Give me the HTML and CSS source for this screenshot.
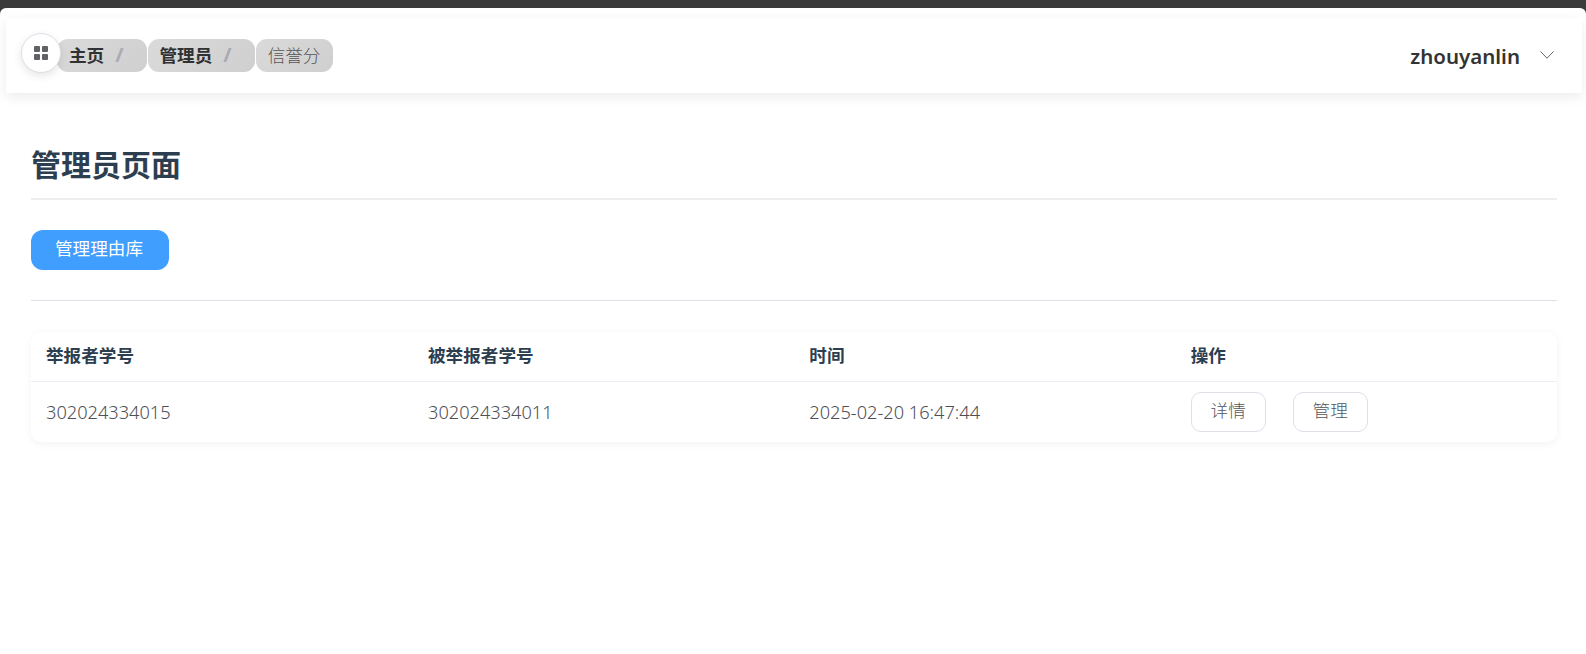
FILE: index.html
```html
<!DOCTYPE html>
<html lang="zh-CN">
<head>
<meta charset="utf-8">
<title>管理员页面</title>
<link rel="stylesheet" href="styles.css">
</head>
<body>
<div class="shell">
  <header class="topbar">
    <nav class="crumbs">
      <button class="toggle" aria-label="menu">
        <svg viewBox="0 0 14 14" width="14" height="14"><rect x="0" y="0" width="6" height="6" rx="1"/><rect x="8" y="0" width="6" height="6" rx="1"/><rect x="0" y="8" width="6" height="6" rx="1"/><rect x="8" y="8" width="6" height="6" rx="1"/></svg>
      </button>
      <span class="crumb crumb-link">主页<i class="sep">/</i></span>
      <span class="crumb crumb-link">管理员<i class="sep">/</i></span>
      <span class="crumb">信誉分</span>
    </nav>
    <div class="user">
      <span class="user-name">zhouyanlin</span>
      <svg class="chevron" viewBox="0 0 14 8" width="14" height="8"><path d="M0.5 0.5L7 7.2L13.5 0.5"/></svg>
    </div>
  </header>
  <main class="content">
    <h1 class="title">管理员页面</h1>
    <div class="actions"><button class="primary">管理理由库</button></div>
    <div class="card">
      <table class="table">
        <thead>
          <tr><th class="col-first">举报者学号</th><th>被举报者学号</th><th>时间</th><th>操作</th></tr>
        </thead>
        <tbody>
          <tr>
            <td>302024334015</td>
            <td>302024334011</td>
            <td>2025-02-20 16:47:44</td>
            <td><div class="ops"><button class="plain">详情</button><button class="plain">管理</button></div></td>
          </tr>
        </tbody>
      </table>
    </div>
  </main>
</div>
</body>
</html>
```
FILE: styles.css
```css
html, body { margin: 0; height: 100%; }
body {
  background: #3a3a3a;
  padding-top: 8px;
  box-sizing: border-box;
  font-family: "Noto Sans", "Noto Sans CJK SC", sans-serif;
  overflow: hidden;
}
button { font-family: inherit; cursor: pointer; }
.shell {
  background: #fff;
  height: 100%;
  border-radius: 6px 6px 0 0;
  padding: 10px 4px 0 6px;
  box-sizing: border-box;
}
.topbar {
  height: 75px;
  background: #fff;
  box-shadow: 0 4px 12px rgba(0, 0, 0, 0.08);
  display: flex;
  align-items: center;
  justify-content: space-between;
  padding: 0 28px 0 15px;
}
.crumbs { display: flex; align-items: center; gap: 1px; }
.toggle {
  width: 40px;
  height: 40px;
  border-radius: 50%;
  border: 1px solid #dcdfe6;
  background: #fff;
  padding: 0;
  margin: -5px -5px 0 0;
  position: relative;
  z-index: 1;
  box-shadow: 0 3px 8px rgba(0, 0, 0, 0.1);
  display: flex;
  align-items: center;
  justify-content: center;
}
.toggle svg { fill: #606266; }
.crumb {
  height: 33px;
  line-height: 32px;
  padding: 0 13px 0 12px;
  border-radius: 11px;
  background: linear-gradient(135deg, #dadada, #cfcfcf);
  font-size: 17.6px;
  color: #555;
  white-space: nowrap;
  font-weight: 300;
}
.crumb-link { font-weight: 700; color: #303133; padding: 0 12px; }
.sep {
  color: #a8abb2;
  font-style: normal;
  font-size: 20px;
  line-height: 32px;
  font-weight: 700;
  margin: 0 11px 0 11px;
  display: inline-block;
  vertical-align: top;
}
.user { display: flex; align-items: center; gap: 20px; }
.user-name { font-size: 20.5px; font-weight: 600; color: #333; }
.chevron { fill: none; stroke: #666; stroke-width: 1; margin-top: -2px; }
.content { padding: 0 25px; }
.title {
  margin: 0;
  padding: 52px 0 13px;
  font-size: 30px;
  line-height: 40px;
  font-weight: 700;
  color: #2c3e50;
  border-bottom: 2px solid #eceef0;
}
.actions {
  padding: 30px 0;
  border-bottom: 1px solid #dcdfe6;
}
.primary {
  display: block;
  width: 138px;
  height: 40px;
  background: #409eff;
  color: #fff;
  border: 0;
  border-radius: 12px;
  font-size: 17.6px;
  font-weight: 400;
  padding: 0 2px 6px 0;
}
.card {
  margin-top: 31px;
  border-radius: 10px;
  background: #fff;
  box-shadow: 0 2px 8px rgba(0, 0, 0, 0.05);
  overflow: hidden;
}
.table { width: 100%; border-collapse: collapse; table-layout: fixed; }
.table th {
  height: 49px;
  padding: 0 15px 4px;
  text-align: left;
  font-size: 17.6px;
  font-weight: 700;
  color: #2c3e50;
  border-bottom: 1px solid #ebeef5;
  box-sizing: border-box;
}
.table .col-first { width: 382px; }
.table td {
  height: 60px;
  padding: 0 15px;
  font-size: 18.2px;
  font-weight: 300;
  color: #4d4f55;
}
.ops { display: flex; gap: 27px; }
.plain {
  width: 75px;
  height: 40px;
  background: #fff;
  border: 1px solid #dcdfe6;
  border-radius: 10px;
  color: #55575c;
  font-size: 17.6px;
  font-weight: 300;
  padding: 0 0 4px;
}
```
